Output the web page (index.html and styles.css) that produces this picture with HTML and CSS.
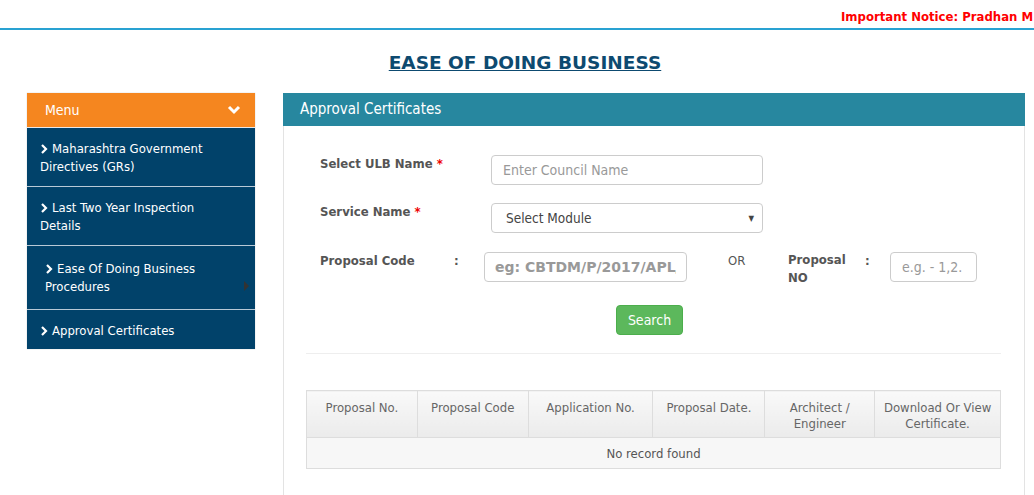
FILE: index.html
```html
<!DOCTYPE html>
<html>
<head>
<meta charset="utf-8">
<link rel="stylesheet" href="styles.css">
</head>
<body>
<div class="topbar">
  <div class="notice">Important Notice: Pradhan M</div>
</div>
<h1 class="title"><span>EASE OF DOING BUSINESS</span></h1>
<div class="layout">
  <aside class="menu">
    <div class="menu-head">
      <span>Menu</span>
      <svg class="chev-down" width="14" height="10" viewBox="0 0 14 10"><path d="M2 2 L7 7 L12 2" fill="none" stroke="#fff" stroke-width="3"/></svg>
    </div>
    <a class="menu-item"><svg class="chev" width="8" height="10" viewBox="0 0 8 10"><path d="M2 1 L6 5 L2 9" fill="none" stroke="#fff" stroke-width="2.2"/></svg>Maharashtra Government Directives (GRs)</a>
    <a class="menu-item"><svg class="chev" width="8" height="10" viewBox="0 0 8 10"><path d="M2 1 L6 5 L2 9" fill="none" stroke="#fff" stroke-width="2.2"/></svg>Last Two Year Inspection Details</a>
    <a class="menu-item sub"><svg class="chev" width="8" height="10" viewBox="0 0 8 10"><path d="M2 1 L6 5 L2 9" fill="none" stroke="#fff" stroke-width="2.2"/></svg>Ease Of Doing Business Procedures<span class="caret"></span></a>
    <a class="menu-item"><svg class="chev" width="8" height="10" viewBox="0 0 8 10"><path d="M2 1 L6 5 L2 9" fill="none" stroke="#fff" stroke-width="2.2"/></svg>Approval Certificates</a>
  </aside>
  <section class="panel">
    <div class="panel-head">Approval Certificates</div>
    <div class="panel-body">
      <div class="form-grid">
        <label class="lbl">Select ULB Name <span class="req">*</span></label>
        <input class="ctl" type="text" placeholder="Enter Council Name">
        <label class="lbl lbl2">Service Name <span class="req">*</span></label>
        <div class="ctl select"><span>Select Module</span><span class="arrow">&#9660;</span></div>
      </div>
      <div class="row3">
        <label class="lbl pc">Proposal Code</label>
        <span class="colon c1">:</span>
        <input class="ctl code" type="text" placeholder="eg: CBTDM/P/2017/APL/">
        <span class="or">OR</span>
        <label class="lbl pn">Proposal NO</label>
        <span class="colon c2">:</span>
        <input class="ctl num" type="text" placeholder="e.g. - 1,2.">
      </div>
      <div class="btn-row"><button class="btn">Search</button></div>
      <hr class="sep">
      <table class="grid">
        <thead>
          <tr>
            <th class="w1">Proposal No.</th>
            <th class="w2">Proposal Code</th>
            <th class="w3">Application No.</th>
            <th class="w4">Proposal Date.</th>
            <th class="w5">Architect / Engineer</th>
            <th class="w6">Download Or View Certificate.</th>
          </tr>
        </thead>
        <tbody>
          <tr><td colspan="6">No record found</td></tr>
        </tbody>
      </table>
    </div>
  </section>
</div>
</body>
</html>
```

FILE: styles.css
```css
* { box-sizing: border-box; }
body {
  margin: 0;
  font-family: "DejaVu Sans Condensed", "DejaVu Sans", sans-serif;
  font-size: 13px;
  color: #555;
  background: #fff;
  overflow: hidden;
}
.topbar {
  height: 30px;
  border-bottom: 2px solid #29a2d2;
  overflow: hidden;
  padding-left: 841px;
}
.notice {
  white-space: nowrap;
  color: #f00;
  font-weight: bold;
  font-size: 13px;
  padding-top: 9px;
}
.title {
  margin: 22px 0 0;
  padding-left: 16px;
  text-align: center;
  font-family: "DejaVu Sans", sans-serif;
  font-size: 18.5px;
  line-height: 22px;
  height: 41px;
  color: #0d4a70;
  font-weight: bold;
}
.title span {
  text-decoration: underline;
}
.layout {
  display: flex;
  align-items: flex-start;
  padding-left: 27px;
  gap: 28px;
}
.menu {
  width: 228px;
  flex: none;
  background: #01426a;
  box-shadow: 0 0 1px #bbb;
}
.menu-head {
  height: 35px;
  background: #f5861f;
  color: #fff;
  font-size: 14px;
  display: flex;
  align-items: center;
  justify-content: space-between;
  padding: 0 14px 0 18px;
  border-bottom: 1px solid #e8e8e8;
}
.menu-item {
  display: block;
  position: relative;
  color: #fff;
  font-size: 13px;
  line-height: 18px;
  padding: 12px 40px 10px 13px;
  border-bottom: 1px solid #b9c9d6;
}
.menu-item:last-child { border-bottom: none; padding: 12px 14px 9px 13px; }
.menu-item.sub { padding: 14px 30px 13px 18px; }
.chev { margin-right: 4px; vertical-align: -1px; }
.caret {
  position: absolute;
  right: 6px;
  top: 35px;
  width: 0; height: 0;
  border-left: 5px solid #333;
  border-top: 5px solid transparent;
  border-bottom: 5px solid transparent;
}
.panel {
  width: 742px;
  flex: none;
  border-left: 1px solid #e3e3e3;
  border-right: 1px solid #e3e3e3;
  height: 420px;
}
.panel-head {
  height: 33px;
  background: #27879f;
  color: #fff;
  font-size: 15px;
  padding: 7px 17px;
  margin-left: -1px;
  margin-right: -1px;
}
.panel-body {
  padding: 29px 23px 0 22px;
}
.form-grid {
  display: grid;
  grid-template-columns: 171px 272px;
  row-gap: 18px;
  padding-left: 14px;
}
.lbl {
  font-weight: bold;
  color: #555;
  font-size: 13px;
}
.form-grid .lbl { padding-top: 1px; }
.req { color: #e00; }
.ctl {
  height: 30px;
  border: 1px solid #ccc;
  border-radius: 4px;
  font-family: inherit;
  font-size: 14px;
  padding: 0 11px;
  color: #555;
  background: #fff;
}
.ctl::placeholder { color: #999; }
.select {
  display: flex;
  align-items: center;
  justify-content: space-between;
  padding: 0 8px 0 14px;
  color: #444;
  font-size: 13.5px;
}
.arrow { font-size: 8px; color: #444; }
.row3 {
  display: flex;
  align-items: flex-start;
  margin-top: 19px;
  padding-left: 14px;
}
.pc { width: 134px; padding-top: 1px; }
.colon { font-weight: bold; padding-top: 1px; }
.c1 { width: 30px; }
.code { width: 203px; font-family: "DejaVu Sans", sans-serif; font-weight: bold; font-size: 14px; padding: 0 10px; }
.code::placeholder { color: #999; }
.or { padding-top: 1px; margin-left: 41px; width: 60px; }
.pn { width: 60px; line-height: 18px; margin-top: -1px; }
.c2 { width: 25px; margin-left: 17px; padding-top: 1px; }
.num { width: 87px; padding: 0 11px; }
.btn-row {
  padding-left: 310px;
  margin-top: 18px;
}
.btn {
  width: 67px;
  height: 30px;
  background: #5cb85c;
  border: 1px solid #4cae4c;
  border-radius: 4px;
  color: #fff;
  font-family: inherit;
  font-size: 14px;
}
.sep {
  border: 0;
  border-top: 1px solid #eee;
  margin: 18px 0 0;
}
.grid {
  margin-top: 36px;
  border-collapse: collapse;
  width: 695px;
}
.grid th {
  font-weight: normal;
  color: #666;
  font-size: 13px;
  line-height: 16px;
  height: 47px;
  padding: 9px 3px 5px;
  vertical-align: top;
  border: 1px solid #ddd;
  background: linear-gradient(#f9f9f9, #ebebeb);
}
.w1 { width: 111px; }
.w2 { width: 111px; }
.w3 { width: 125px; }
.w4 { width: 112px; }
.w5 { width: 110px; }
.w6 { width: 126px; }
.grid td {
  height: 31px;
  text-align: center;
  border: 1px solid #ddd;
  background: #f7f7f7;
  color: #555;
}
```
